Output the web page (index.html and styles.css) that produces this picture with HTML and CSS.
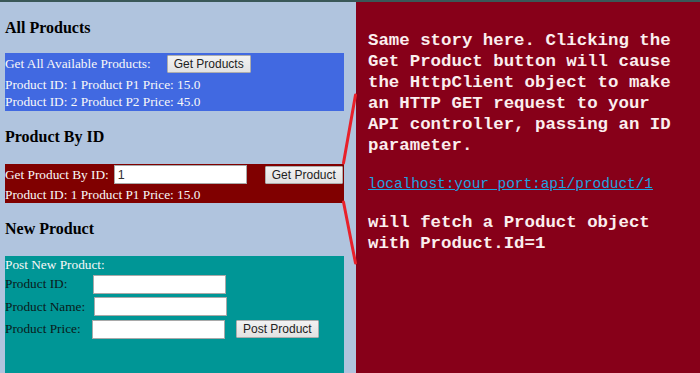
FILE: index.html
```html
<!DOCTYPE html>
<html lang="en">
<head>
  <meta charset="UTF-8" />
  <title>Products</title>
  <link rel="stylesheet" href="styles.css">
</head>
<body>
  <div class="page">
    <div class="client">
      <h3 class="first">All Products</h3>
      <div class="box blue">
        <div class="row">
          <span>Get All Available Products:</span>
          <button class="get-all">Get Products</button>
        </div>
        <div class="line">Product ID: 1 Product P1 Price: 15.0</div>
        <div class="line">Product ID: 2 Product P2 Price: 45.0</div>
      </div>

      <h3>Product By ID</h3>
      <div class="box maroon">
        <div class="row">
          <span>Get Product By ID:</span>
          <input class="id-input" type="text" value="1" />
          <button class="get-one">Get Product</button>
        </div>
        <div class="line">Product ID: 1 Product P1 Price: 15.0</div>
      </div>

      <h3>New Product</h3>
      <div class="box teal">
        <div class="line">Post New Product:</div>
        <div class="form-row">
          <label>Product ID:</label>
          <input type="text" />
        </div>
        <div class="form-row">
          <label>Product Name:</label>
          <input class="name-input" type="text" />
        </div>
        <div class="form-row">
          <label>Product Price:</label>
          <input class="price-input" type="text" />
          <button class="post">Post Product</button>
        </div>
      </div>
    </div>

    <div class="notes">
      <p>Same story here. Clicking the Get Product button will cause the HttpClient object to make an HTTP GET request to your API controller, passing an ID parameter.</p>
      <p><a href="#">localhost:your port:api/product/1</a></p>
      <p>will fetch a Product object with Product.Id=1</p>
    </div>
  </div>

  <!-- callout lines from the note to the Product By ID box -->
  <svg class="callout" width="30" height="180" viewBox="330 90 30 180">
    <line x1="355.5" y1="95" x2="343.5" y2="163" />
    <line x1="343.5" y1="202" x2="355.5" y2="263" />
  </svg>
</body>
</html>
```

FILE: styles.css
```css
body {
  margin: 0;
  border-top: 2px solid #3a5858;
  font-family: "Liberation Serif", "Times New Roman", serif;
  font-size: 13.3px;
  overflow: hidden;
}
.page {
  display: flex;
  height: 371px;
}
.client {
  width: 351px;
  padding-left: 5px;
  background: #b0c4de;
}
h3 {
  font-size: 16px;
  line-height: 19px;
  margin: 16px 0 18px;
}
h3.first {
  margin-top: 16px;
  margin-bottom: 16px;
}
.box {
  width: 339px;
  color: #f8f8f8;
}
.blue {
  background: #4169e1;
  padding-bottom: 1px;
}
.maroon {
  background: #800000;
}
.teal {
  background: #009696;
  height: 130px;
}
.row {
  display: flex;
  align-items: center;
  height: 22.5px;
  white-space: nowrap;
}
.line {
  line-height: 17px;
  white-space: nowrap;
}
button {
  font-family: "Liberation Sans", Arial, sans-serif;
  font-size: 12px;
  color: #222;
  height: 18px;
  padding: 0 6px;
  border: 1px solid #adadad;
  border-radius: 1px;
  background: linear-gradient(#f2f2f2, #e2e2e2);
  white-space: nowrap;
}
input {
  box-sizing: border-box;
  width: 133px;
  height: 19px;
  padding: 0 3px;
  border: 1px solid #a9a9a9;
  font-family: "Liberation Sans", Arial, sans-serif;
  font-size: 12.5px;
  color: #333;
}
.get-all {
  margin-left: 16px;
}
.id-input {
  margin-left: 5px;
}
.get-one {
  margin-left: 18px;
}
.form-row {
  display: flex;
  align-items: center;
  height: 22.5px;
  color: #0a1a1a;
  white-space: nowrap;
}
.form-row label {
  width: 88px;
}
.name-input {
  margin-left: 1px;
}
.price-input {
  margin-left: -1px;
}
.post {
  margin-left: 11px;
}
.notes {
  flex: 1;
  background: #870019;
  color: #fbeeee;
  padding: 28px 10px 0 12px;
  font-family: "Liberation Mono", "DejaVu Sans Mono", monospace;
  font-weight: bold;
  font-size: 17.4px;
  line-height: 21px;
}
.notes p {
  margin: 0 0 17px;
}
.notes a {
  color: #1ea3e0;
  font-weight: normal;
  font-size: 14.4px;
  white-space: nowrap;
}
.callout {
  position: absolute;
  left: 330px;
  top: 90px;
}
.callout line {
  stroke: #e8202a;
  stroke-width: 3;
  stroke-linecap: round;
}
```
